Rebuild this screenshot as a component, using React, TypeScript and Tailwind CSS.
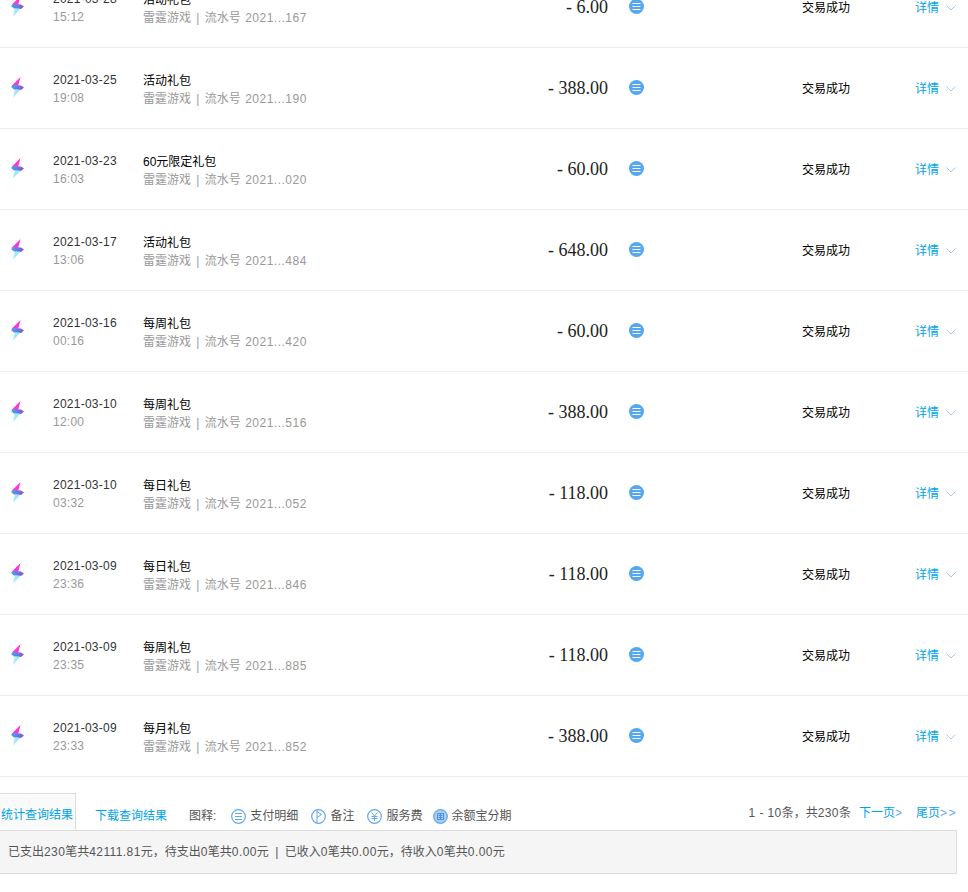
const rows = [
  { date: "2021-03-28", time: "15:12", title: "活动礼包", serial: "167", amount: "- 6.00" },
  { date: "2021-03-25", time: "19:08", title: "活动礼包", serial: "190", amount: "- 388.00" },
  { date: "2021-03-23", time: "16:03", title: "60元限定礼包", serial: "020", amount: "- 60.00" },
  { date: "2021-03-17", time: "13:06", title: "活动礼包", serial: "484", amount: "- 648.00" },
  { date: "2021-03-16", time: "00:16", title: "每周礼包", serial: "420", amount: "- 60.00" },
  { date: "2021-03-10", time: "12:00", title: "每周礼包", serial: "516", amount: "- 388.00" },
  { date: "2021-03-10", time: "03:32", title: "每日礼包", serial: "052", amount: "- 118.00" },
  { date: "2021-03-09", time: "23:36", title: "每日礼包", serial: "846", amount: "- 118.00" },
  { date: "2021-03-09", time: "23:35", title: "每周礼包", serial: "885", amount: "- 118.00" },
  { date: "2021-03-09", time: "23:33", title: "每月礼包", serial: "852", amount: "- 388.00" },
];

function Num({ children }: { children: React.ReactNode }) {
  return <span className="tracking-[0.4px]">{children}</span>;
}

function BoltLogo({ id }: { id: string }) {
  return (
    <svg width="15" height="21" viewBox="0 0 15 21" className="block">
      <defs>
        <linearGradient id={id} x1="0" y1="0" x2="1" y2="0.3">
          <stop offset="0" stopColor="#35b4f8" />
          <stop offset="1" stopColor="#8a55d0" />
        </linearGradient>
      </defs>
      <path d="M10.5 0 L1.5 9 L8 9.5 Z" fill="#ff35d4" />
      <path d="M3.5 8 L1 10 L4 12.5 L11 13 L14 10.5 L11 8.5 Z" fill={`url(#${id})`} />
      <path d="M5 12.5 L3 20.5 L10.5 12.8 Z" fill="#9aecfc" />
    </svg>
  );
}

function DetailDot() {
  return (
    <svg width="15" height="15" viewBox="0 0 15 15" className="block">
      <circle cx="7.5" cy="7.5" r="7.5" fill="#55a7ee" />
      <path d="M3.5 4.5h8M3.5 7.5h8M3.5 10.5h8" stroke="#fff" strokeWidth="1.2" />
    </svg>
  );
}

function Chevron() {
  return (
    <svg width="10" height="6" viewBox="0 0 10 6" className="block">
      <path d="M0.5 0.5 L5 5 L9.5 0.5" fill="none" stroke="#a8c8ea" strokeWidth="1" />
    </svg>
  );
}

function LegendIcon({ kind }: { kind: "lines" | "flag" | "yen" | "bao" }) {
  return (
    <svg width="15" height="15" viewBox="0 0 15 15" className="block">
      <circle cx="7.5" cy="7.5" r="6.8" fill={kind === "bao" ? "#a9cdf3" : "none"} stroke="#62a8ee" strokeWidth="1.2" />
      {kind === "lines" && <path d="M4 4.5h7M4 7.5h7M4 10.5h7" stroke="#62a8ee" strokeWidth="1" fill="none" />}
      {kind === "flag" && <path d="M6 14V1M6 2.5 L10.5 5.5 L6 8.5" stroke="#62a8ee" strokeWidth="1" fill="none" />}
      {kind === "yen" && <path d="M4.5 3.5 L7.5 7 L10.5 3.5M7.5 7v5M4.5 7.5h6M4.5 9.5h6" stroke="#62a8ee" strokeWidth="1" fill="none" />}
      {kind === "bao" && <path d="M4.5 4.5h6v6h-6zM5.5 6.5h4M5.5 8.5h4M7.5 4.5v6" stroke="#4f8fdc" strokeWidth="1" fill="none" />}
    </svg>
  );
}

function Row({ row, index }: { row: (typeof rows)[number]; index: number }) {
  return (
    <div className="flex h-[81px] items-center border-b border-[#eeeeee]">
      <div className="ml-[10px] w-[43px] pb-[2px]">
        <BoltLogo id={`bolt-${index}`} />
      </div>
      <div className="w-[90px] pt-[2px] text-[12px] leading-[18px] tracking-[0.25px]">
        <div className="text-[#333333]">{row.date}</div>
        <div className="text-[#999999]">{row.time}</div>
      </div>
      <div className="w-[345px] pt-[4px] text-[12px] leading-[18px]">
        <div className="text-black">{row.title}</div>
        <div className="text-[#999999]">
          雷霆游戏<span className="mx-[2px]"> | </span>流水号 <span className="ml-px tracking-[0.5px]">2021...{row.serial}</span>
        </div>
      </div>
      <div className="w-[120px] text-right font-['Liberation_Serif',serif] text-[18px] leading-[24px] text-[#222222]">
        {row.amount}
      </div>
      <div className="ml-[21px] w-[173px] pb-[2px]">
        <DetailDot />
      </div>
      <div className="w-[113px] pt-[2px] text-[12px] text-black">交易成功</div>
      <div className="flex items-center pt-[2px] text-[12px] text-[#00a3e8]">
        详情
        <span className="ml-[7px]">
          <Chevron />
        </span>
      </div>
    </div>
  );
}

export default function App() {
  return (
    <div className="h-[892px] overflow-hidden bg-white font-['Liberation_Sans','Noto_Sans_CJK_SC',sans-serif] text-[12px]">
      <div className="-mt-[33px]">
        {rows.map((row, i) => (
          <Row key={i} row={row} index={i} />
        ))}
      </div>
      <div className="mt-4 flex h-[37px] w-[957px] items-center text-[#555555]">
        <div className="flex h-[37px] w-[76px] items-center border-t border-r border-[#dddddd] bg-[#fafafa] pt-[5px] pl-px text-[#00a3e8]">
          统计查询结果
        </div>
        <div className="ml-[19px] pt-[9px] text-[#00a3e8]">下载查询结果</div>
        <div className="ml-[22px] flex items-center gap-1 pt-[9px]">
          <span className="mr-[11px]">图释:</span>
          <LegendIcon kind="lines" />
          <span>支付明细</span>
          <span className="ml-[9px]">
            <LegendIcon kind="flag" />
          </span>
          <span>备注</span>
          <span className="ml-[9px]">
            <LegendIcon kind="yen" />
          </span>
          <span>服务费</span>
          <span className="ml-[7px]">
            <LegendIcon kind="bao" />
          </span>
          <span className="-ml-px">余额宝分期</span>
        </div>
        <div className="ml-auto flex items-center pt-[3px]">
          <span>
            <Num>1 - 10</Num>条，共<Num>230</Num>条
          </span>
          <span className="ml-[8px] text-[#00a3e8]">
            下一页<span className="tracking-[1px] text-[#62a8ee]">&gt;</span>
          </span>
          <span className="ml-[13px] text-[#00a3e8]">
            尾页<span className="tracking-[1.5px] text-[#62a8ee]">&gt;&gt;</span>
          </span>
        </div>
      </div>
      <div className="-ml-px flex h-[44px] w-[958px] items-center border border-[#dddddd] bg-[#f5f5f5] pl-[8px] whitespace-pre text-[#555555]">
        <span>
          已支出<Num>230</Num>笔共<Num>42111.81</Num>元，待支出<Num>0</Num>笔共<Num>0.00</Num>元
          <span className="mx-[3px]"> | </span>
          已收入<Num>0</Num>笔共<Num>0.00</Num>元，待收入<Num>0</Num>笔共<Num>0.00</Num>元
        </span>
      </div>
    </div>
  );
}
